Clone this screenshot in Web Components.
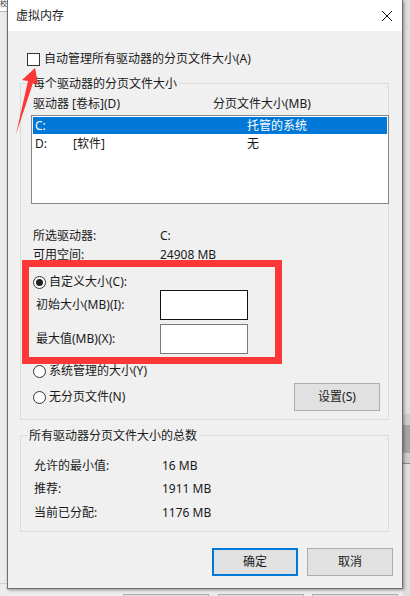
<!DOCTYPE html>
<html lang="zh">
<head>
<meta charset="utf-8">
<title>虚拟内存</title>
<style>
    html, body { margin: 0; padding: 0; background: #f0f0f0; }
    body { width: 410px; height: 596px; overflow: hidden; font: 12px/16px "Noto Sans", "Noto Sans CJK SC", sans-serif; color: #1a1a1a; }
</style>
</head>
<body>
<script>
// everything behind the dialog: cut-off bits of the parent window
class VmBackdrop extends HTMLElement {
    constructor() {
        super();
        this.attachShadow({ mode: 'open' }).innerHTML = `
            <style>
                :host { display: block; position: relative; width: 410px; height: 596px; overflow: hidden; background: #ececec; }
                .top { position: absolute; left: 0; top: 0; width: 7px; height: 11px; background: #fff; border-bottom: 1px solid #b5b5b5; }
                .glyph { position: absolute; left: 0; top: 0; font-size: 7px; line-height: 8px; color: #333; }
                .edge { position: absolute; left: 403px; top: 0; width: 7px; height: 596px; background: linear-gradient(#dedede 0 414px, #cdcdcd 414px 425px, #a6a6a6 425px 453px, #cdcdcd 453px 463px, #8a8a8a 463px 464px, #dedede 464px); }
                .peek { position: absolute; top: 594px; height: 4px; background: #e1e1e1; border: 1px solid #adadad; box-sizing: border-box; }
                .line { position: absolute; left: 0; top: 583px; width: 7px; height: 1px; background: #d0d0d0; }
                .dialog { position: absolute; left: 7px; top: 0; }
            </style>
            <div class="top"></div>
            <div class="glyph">校</div>
            <div class="edge"></div>
            <div class="line"></div>
            <div class="peek" style="left:123px;width:86px"></div>
            <div class="peek" style="left:218px;width:86px"></div>
            <div class="peek" style="left:312px;width:86px"></div>
            <div class="dialog"><slot></slot></div>
            <slot name="marks"></slot>
        `;
    }
}
customElements.define('vm-backdrop', VmBackdrop);

class VmDialog extends HTMLElement {
    constructor() {
        super();
        this.attachShadow({ mode: 'open' }).innerHTML = `
            <style>
                :host {
                    display: flex; flex-direction: column; box-sizing: border-box;
                    width: 396px; height: 589px; position: relative;
                    background: #f0f0f0; border: 1px solid #6f6f6f; border-top: 0;
                    box-shadow: 1px 1px 3px rgba(0,0,0,0.4);
                }
                .bar { display: flex; align-items: center; justify-content: space-between; height: 31px; padding: 0 10px 0 8px; background: #fff; }
                .bar svg { display: block; }
                .body { flex: 1; display: flex; flex-direction: column; padding: 0 13px 0 12px; }
            </style>
            <div class="bar">
                <span><slot name="title"></slot></span>
                <svg width="10" height="10" viewBox="0 0 10 10"><path d="M0 0 L10 10 M10 0 L0 10" stroke="#111" stroke-width="1" fill="none"/></svg>
            </div>
            <div class="body"><slot></slot></div>
        `;
    }
}
customElements.define('vm-dialog', VmDialog);

class VmCheck extends HTMLElement {
    constructor() {
        super();
        this.attachShadow({ mode: 'open' }).innerHTML = `
            <style>
                :host { display: flex; align-items: center; gap: 4px; height: 14px; }
                i { display: block; box-sizing: border-box; width: 13px; height: 13px; background: #fff; border: 1px solid #333; }
            </style>
            <i></i><slot></slot>
        `;
    }
}
customElements.define('vm-check', VmCheck);

class VmRadio extends HTMLElement {
    constructor() {
        super();
        this.attachShadow({ mode: 'open' }).innerHTML = `
            <style>
                :host { display: flex; align-items: center; gap: 3px; height: 14px; }
                svg { display: block; }
                .dot { display: none; }
                :host([checked]) .dot { display: inline; }
            </style>
            <svg width="13" height="13" viewBox="0 0 13 13">
                <circle cx="6.5" cy="6.5" r="6" fill="#fff" stroke="#333"/>
                <circle class="dot" cx="6.5" cy="6.5" r="3.5" fill="#222"/>
            </svg>
            <slot></slot>
        `;
    }
}
customElements.define('vm-radio', VmRadio);

class VmButton extends HTMLElement {
    constructor() {
        super();
        this.attachShadow({ mode: 'open' }).innerHTML = `
            <style>
                :host {
                    display: flex; align-items: center; justify-content: center; box-sizing: border-box;
                    width: 86px; height: 28px; background: #e1e1e1; border: 1px solid #adadad;
                }
                :host([default]) { border: 2px solid #0078d7; }
            </style>
            <slot></slot>
        `;
    }
}
customElements.define('vm-button', VmButton);

class VmGroup extends HTMLElement {
    constructor() {
        super();
        this.attachShadow({ mode: 'open' }).innerHTML = `
            <style>
                :host { display: block; box-sizing: border-box; border: 1px solid #dcdcdc; position: relative; }
                .legend { position: absolute; top: -8px; left: var(--legend-x, 10px); padding: 0 2px; background: #f0f0f0; line-height: 16px; white-space: nowrap; }
            </style>
            <div class="legend"><slot name="legend"></slot></div>
            <slot></slot>
        `;
    }
}
customElements.define('vm-group', VmGroup);

// drive table: header columns plus the listbox rows
class VmDrives extends HTMLElement {
    constructor() {
        super();
        this.attachShadow({ mode: 'open' }).innerHTML = `
            <style>
                :host { display: block; }
                .head { display: grid; grid-template-columns: 180px 1fr; height: 16px; padding: 0 0 0 12px; margin-bottom: 3px; }
                .box { box-sizing: border-box; height: 89px; margin: 0 -1px 0 10px; padding: 1px; background: #fff; border: 1px solid #828790; }
                .row { display: grid; grid-template-columns: 38px 174px 1fr; height: 17px; line-height: 17px; padding-left: 2px; }
                .row + .row { height: 19px; line-height: 19px; }
                .sel { background: #0078d7; color: #fff; }
            </style>
            <div class="head"><span>驱动器 [卷标](D)</span><span>分页文件大小(MB)</span></div>
            <div class="box">
                <div class="row sel"><span>C:</span><span></span><span>托管的系统</span></div>
                <div class="row"><span>D:</span><span>[软件]</span><span>无</span></div>
            </div>
        `;
    }
}
customElements.define('vm-drives', VmDrives);

// label / value line
class VmInfo extends HTMLElement {
    constructor() {
        super();
        this.attachShadow({ mode: 'open' }).innerHTML = `
            <style>
                :host { display: grid; grid-template-columns: var(--label-w, 127px) 1fr; align-items: center; }
            </style>
            <slot name="label"></slot><slot></slot>
        `;
    }
}
customElements.define('vm-info', VmInfo);

class VmField extends HTMLElement {
    constructor() {
        super();
        this.attachShadow({ mode: 'open' }).innerHTML = `
            <style>
                :host { display: grid; grid-template-columns: 124px 88px; align-items: center; padding-left: 3px; height: 30px; }
                i { display: block; box-sizing: border-box; height: 30px; background: #fff; border: 1px solid #7a7a7a; }
                :host([focus]) i { border-color: #111; }
            </style>
            <span><slot></slot></span><i></i>
        `;
    }
}
customElements.define('vm-field', VmField);

// red annotations drawn on top of the screenshot
class VmMarks extends HTMLElement {
    constructor() {
        super();
        this.attachShadow({ mode: 'open' }).innerHTML = `
            <style>
                :host { display: block; position: absolute; left: 0; top: 0; width: 410px; height: 596px; pointer-events: none; }
                .rect { position: absolute; left: 22px; top: 260px; width: 260px; height: 104px; box-sizing: border-box; border: 7px solid #fb3737; }
                svg { position: absolute; left: 0; top: 0; }
            </style>
            <div class="rect"></div>
            <svg width="60" height="140"><path d="M35 68 L22 80 L28 81 L16 134 L33 83 L38 84 Z" fill="#fb3737"/></svg>
        `;
    }
}
customElements.define('vm-marks', VmMarks);
</script>

<style>
    vm-check { margin: 21px 0 0 7px; }
    .g1 { margin-top: 17px; height: 337px; padding-top: 12px; }
    .g2 { margin-top: 15px; height: 97px; --legend-x: 6px; }
    .info { margin: 22px 0 0 12px; }
    .info vm-info { height: 19px; }
    .custom { margin: 11px 0 0 12px; display: flex; flex-direction: column; }
    .custom vm-field { margin-top: 1px; }
    .custom vm-field + vm-field { margin-top: 4px; }
    .lower { display: flex; justify-content: space-between; align-items: flex-end; margin: 10px 8px 6px 12px; }
    .lower div { display: flex; flex-direction: column; gap: 12px; padding-bottom: 7px; }
    .totals { display: flex; flex-direction: column; padding: 18px 0 0 13px; --label-w: 128px; }
    .totals vm-info { height: 23.5px; }
    .actions { display: flex; justify-content: flex-end; gap: 9px; margin: 16px -4px 0 0; }
</style>

<vm-backdrop>
    <vm-dialog>
        <span slot="title">虚拟内存</span>
        <vm-check>自动管理所有驱动器的分页文件大小(A)</vm-check>
        <vm-group class="g1">
            <span slot="legend">每个驱动器的分页文件大小</span>
            <vm-drives></vm-drives>
            <div class="info">
                <vm-info><span slot="label">所选驱动器:</span>C:</vm-info>
                <vm-info><span slot="label">可用空间:</span>24908 MB</vm-info>
            </div>
            <div class="custom">
                <vm-radio checked>自定义大小(C):</vm-radio>
                <vm-field focus>初始大小(MB)(I):</vm-field>
                <vm-field>最大值(MB)(X):</vm-field>
            </div>
            <div class="lower">
                <div>
                    <vm-radio>系统管理的大小(Y)</vm-radio>
                    <vm-radio>无分页文件(N)</vm-radio>
                </div>
                <vm-button>设置(S)</vm-button>
            </div>
        </vm-group>
        <vm-group class="g2">
            <span slot="legend">所有驱动器分页文件大小的总数</span>
            <div class="totals">
                <vm-info><span slot="label">允许的最小值:</span>16 MB</vm-info>
                <vm-info><span slot="label">推荐:</span>1911 MB</vm-info>
                <vm-info><span slot="label">当前已分配:</span>1176 MB</vm-info>
            </div>
        </vm-group>
        <div class="actions">
            <vm-button default>确定</vm-button>
            <vm-button>取消</vm-button>
        </div>
    </vm-dialog>
    <vm-marks slot="marks"></vm-marks>
</vm-backdrop>
</body>
</html>
